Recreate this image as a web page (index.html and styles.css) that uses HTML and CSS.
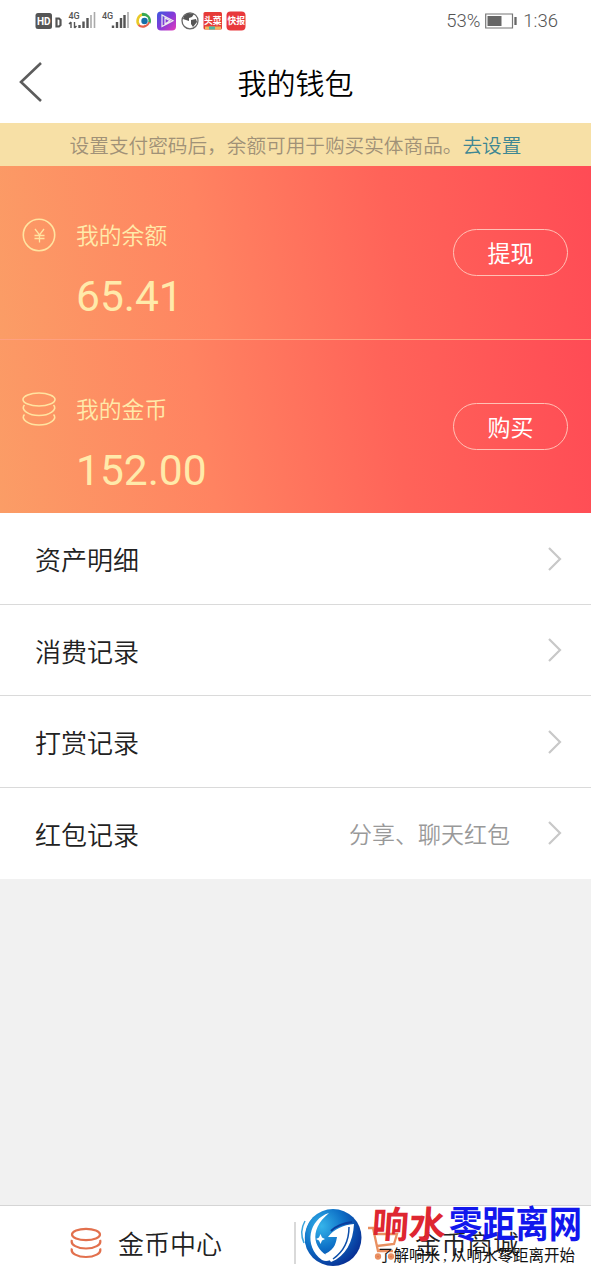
FILE: index.html
```html
<!DOCTYPE html>
<html lang="zh-CN">
<head>
<meta charset="utf-8">
<title>我的钱包</title>
<link rel="stylesheet" href="styles.css">
</head>
<body>
<div class="app">
  <div class="status">
    <svg class="status-icons" width="214" height="24" viewBox="34 9 214 24">
      <rect x="35.500" y="13" width="16.500" height="16" rx="2.500" fill="#555"/>
      <text x="37" y="25" class="hd" textLength="13.500">HD</text>
      <path d="M56.500 18.500V26.500H59L60.500 25V20L59 18.500Z" fill="none" stroke="#555" stroke-width="2.200"/>
      <text x="68.500" y="19" class="net">4G</text>
      <path d="M71 22V28M69 24L71 22M74.500 22V28M76.500 26L74.500 28" stroke="#555" stroke-width="1.400" fill="none"/>
      <path d="M79.500 25V28M83.500 21.500V28M87.500 18V28" stroke="#555" stroke-width="2.400"/>
      <path d="M91 15V28M94.500 12V28" stroke="#aaa" stroke-width="1.600"/>
      <text x="102" y="19" class="net">4G</text>
      <path d="M113 25.500V28M117 22V28M121 18V28M124.500 15V28" stroke="#555" stroke-width="2.400"/>
      <path d="M128 12V28" stroke="#aaa" stroke-width="1.600"/>
      <path d="M139 25A6.500 6.500 0 0 1 143 14.500" stroke="#e9c928" stroke-width="2.600" fill="none"/>
      <path d="M142 14.500A6.500 6.500 0 0 1 149 23" stroke="#38a852" stroke-width="3.200" fill="none"/>
      <path d="M149 22A6.500 6.500 0 0 1 138.500 25" stroke="#e66049" stroke-width="2.200" fill="none"/>
      <circle cx="144" cy="20.500" r="4.500" fill="#fff"/><circle cx="144.500" cy="21" r="3.200" fill="#176fa8"/>
      <defs><linearGradient id="video" x2="1" y2="1"><stop stop-color="#3c58df"/><stop offset=".5" stop-color="#833bd9"/><stop offset="1" stop-color="#e63bbb"/></linearGradient>
      <radialGradient id="globe" cx=".3" cy=".3" r=".8"><stop stop-color="#35b4ea"/><stop offset=".5" stop-color="#0d6fc6"/><stop offset="1" stop-color="#072b91"/></radialGradient></defs>
      <rect x="157" y="11.500" width="19" height="19" rx="4" fill="url(#video)"/>
      <path d="M162 15V26.500L173 20.800ZM165 18V24L170 20.800Z" fill="none" stroke="#eee" stroke-width="1.200"/>
      <circle cx="190" cy="20.800" r="8" fill="#fff" stroke="#666" stroke-width="1.300"/>
      <path d="M184 16L188 13L194 14L192 17L189 18L189 21L186 20L183 19ZM191 20L196 19L197 22L193 27L191 24Z" fill="#555"/>
      <rect x="203.500" y="12" width="18.500" height="17.500" rx="1.500" fill="#e63b38"/>
      <text x="204" y="24" class="app-name">头菜</text><path d="M205 28H221" stroke="#eeb85d" stroke-width="3"/><path d="M209 28H215" stroke="#4db6a4" stroke-width="3"/>
      <rect x="226.500" y="11.500" width="19" height="19" rx="4" fill="#e8393c"/>
      <text x="227.500" y="24" class="app-name">快报</text>
    </svg>
    <div class="status-right"><span>53%</span>
      <svg width="33" height="16" viewBox="0 0 33 16"><path d="M.7 1H27.500V15H.7Z" fill="none" stroke="#777" stroke-width="1.200"/><path d="M2.500 3H16.500V13H2.500Z" fill="#666"/><path d="M30.500 4V12" stroke="#666" stroke-width="2.300"/></svg>
      <span>1:36</span></div>
  </div>
  <header class="header">
    <svg class="back" width="26" height="42" viewBox="0 0 26 42"><path d="M23 2L3 21L23 40" fill="none" stroke="#5c5c5c" stroke-width="2.600"/></svg>
    <h1 class="title">我的钱包</h1>
  </header>
  <div class="notice">设置支付密码后，余额可用于购买实体商品。<span class="notice-link">去设置</span></div>
  <section class="card card-first">
    <svg class="card-icon" width="34" height="34" viewBox="0 0 34 34" fill="none" stroke="#ffe3a0"><circle cx="17" cy="17" r="15.700" stroke-width="1.600"/><path d="M13 11L17.500 17L22 11M17.500 17V24.500M12.500 17.500H22.500M12.500 20.500H22.500" stroke-width="1.300"/></svg>
    <div class="card-body"><div class="card-label">我的余额</div><div class="amount">65.41</div></div>
    <div class="pill">提现</div>
  </section>
  <section class="card">
    <svg class="card-icon" width="34" height="34" viewBox="0 0 34 34" fill="none" stroke="#ffe3a0" stroke-width="1.600"><ellipse cx="17" cy="7.500" rx="16" ry="6.500"/><path d="M2.500 13C-2 18 7 23.500 17 23.500S36 18 31.500 13M2.500 22.500C-2 27.500 7 33 17 33S36 27.500 31.500 22.500"/></svg>
    <div class="card-body"><div class="card-label">我的金币</div><div class="amount">152.00</div></div>
    <div class="pill">购买</div>
  </section>
  <nav class="list">
    <div class="row"><span>资产明细</span><svg class="chev" width="16" height="24" viewBox="0 0 16 24"><path d="M2 1L13 12L2 23"/></svg></div>
    <div class="row"><span>消费记录</span><svg class="chev" width="16" height="24" viewBox="0 0 16 24"><path d="M2 1L13 12L2 23"/></svg></div>
    <div class="row"><span>打赏记录</span><svg class="chev" width="16" height="24" viewBox="0 0 16 24"><path d="M2 1L13 12L2 23"/></svg></div>
    <div class="row"><span>红包记录</span><span class="hint">分享、聊天红包</span><svg class="chev" width="16" height="24" viewBox="0 0 16 24"><path d="M2 1L13 12L2 23"/></svg></div>
  </nav>
  <footer class="footer">
    <div class="tab">
      <svg width="32" height="32" viewBox="0 0 32 32" fill="none" stroke="#e2704d" stroke-width="2.200"><ellipse cx="16" cy="7.500" rx="14" ry="5.700"/><path d="M2 13C0 18 8 21.500 16 21.500S32 18 30 13M2 21.500C0 26.500 8 30 16 30S32 26.500 30 21.500"/></svg>
      <span>金币中心</span>
    </div>
    <div class="tab tab-shop">
      <svg width="32" height="36" viewBox="0 0 32 36" fill="none" stroke="#e99061" stroke-width="2.300"><path d="M1 3H6L11 26H26M7 9H30L27 19L10 21"/><circle cx="11" cy="31.500" r="2" fill="#e2704d"/><circle cx="24" cy="31.500" r="2" fill="#e2704d"/></svg>
      <span>金币商城</span>
    </div>
  </footer>
  <svg class="watermark" width="291" height="80" viewBox="300 1200 291 80">
    <circle cx="333" cy="1237.500" r="28.500" fill="url(#globe)"/>
    <path d="M321 1210C305 1219 299 1241 311 1259C301 1248 298 1225 311 1214Z" fill="#fff"/>
    <path d="M305 1221C301 1228 301 1236 304 1243" fill="none" stroke="#3ba4dc" stroke-width="1.500"/>
    <path d="M329 1213C309 1219 303 1246 322 1260C326 1262 330 1261 333 1258C314 1252 307 1231 329 1213Z" fill="#fff"/>
    <path d="M320.500 1234L322 1237.500L325 1239L322 1240.500L320.500 1244L319 1240.500L316 1239L319 1237.500Z" fill="#fff"/>
    <path d="M325 1254C336 1249 336 1241 337 1237L328 1237C334 1229 343 1225 354 1224C353 1242 346 1256 331 1262Z" fill="#fff"/>
    <path d="M349 1227C349 1241 343 1252 333 1259" fill="none" stroke="#0d4faa" stroke-width="1.500"/>
    <path d="M331 1231C337 1225 344 1223 352 1222" fill="none" stroke="#0a3e9e" stroke-width="2"/>
    <text transform="translate(371 1238) skewX(-4)" class="brand brand-red">响水</text>
    <text transform="translate(449 1238) scale(.9 1)" class="brand brand-blue">零距离网</text>
    <text x="378" y="1261" class="slogan" textLength="62">了解响水</text>
    <text x="443" y="1261" class="slogan">,</text>
    <text x="451" y="1261" class="slogan" textLength="124">从响水零距离开始</text>
  </svg>
</div>
</body>
</html>
```
FILE: styles.css
```css
* { box-sizing: border-box; }
body { margin: 0; background: #f1f1f1; font-family: Roboto, "Noto Sans CJK SC", sans-serif; font-weight: 350; color: #222; }
.app { position: relative; width: 591px; height: 1280px; display: flex; flex-direction: column; overflow: hidden; }
.status { height: 42px; background: #fff; display: flex; justify-content: space-between; align-items: center; padding: 0 33px 0 34px; flex: none; }
.status-icons { display: block; }
.hd { font: bold 10px Roboto, sans-serif; fill: #fff; }
.net { font: 500 9px Roboto, sans-serif; fill: #555; }
.app-name { font: bold 8.800px "Noto Sans CJK SC", sans-serif; fill: #fff; }
.status-right { display: flex; align-items: center; gap: 5px; font-size: 18.500px; font-weight: 350; color: #555; }
.header { height: 81px; background: #fff; display: grid; grid-template-columns: 60px 1fr 60px; align-items: center; flex: none; }
.back { margin: -2px 0 0 18px; }
.title { margin: 4px 0 0; text-align: center; font-size: 29px; font-weight: 350; line-height: 40px; color: #000; }
.notice { height: 43px; background: #f7e0a6; text-align: center; font-size: 19.650px; line-height: 47px; color: #a09177; white-space: nowrap; flex: none; }
.notice-link { color: #3e8793; }
.card { height: 173px; display: flex; padding: 52px 23px 0 22px; background: linear-gradient(80deg, #fb9d66 0%, #ff8361 35%, #ff6359 66%, #ff4b55 100%); color: #ffeaaa; flex: none; }
.card-first { height: 174px; border-bottom: 1px solid #ffa080; }
.card-icon { flex: none; }
.card-body { flex: 1; padding-left: 20px; }
.card-label { font-size: 22.800px; line-height: 38px; }
.amount { font-size: 42.500px; line-height: 50px; margin-top: 16px; font-weight: 400; }
.pill { width: 115px; height: 47px; margin-top: 11px; border: 1px solid #ffc1b5; border-radius: 24px; color: #fff; font-size: 23px; line-height: 49px; text-align: center; font-weight: 400; }
.list { background: #fff; flex: none; }
.row { height: 91.500px; border-bottom: 1px solid #dadada; display: flex; align-items: center; padding: 1px 28px 0 35px; font-size: 26px; }
.row:last-child { border-bottom: 0; padding-top: 0; }
.hint { margin-left: auto; margin-right: 37px; font-size: 23px; color: #999; }
.chev { margin-left: auto; fill: none; stroke: #c8c8c8; stroke-width: 2.200px; }
.hint + .chev { margin-left: 0; }
.footer { height: 75px; margin-top: auto; border-top: 1px solid #d5d5d5; background: #fff; display: grid; grid-template-columns: 294px 1fr; flex: none; }
.tab { display: flex; align-items: center; gap: 16px; padding-left: 70px; font-size: 26px; }
.tab span { margin-top: -2px; }
.tab-shop { padding-left: 73px; background: linear-gradient(#d9d9d9, #d9d9d9) 0 16px / 2px 42px no-repeat; }
.watermark { position: absolute; left: 300px; top: 1200px; overflow: visible; }
.brand { font: 700 37px "Noto Sans CJK SC", sans-serif; }
.brand-red { fill: #de2631; }
.brand-blue { fill: #1217ed; }
.slogan { font: 400 15.500px "Liberation Serif", "Noto Sans CJK SC", serif; fill: #111; }
```
